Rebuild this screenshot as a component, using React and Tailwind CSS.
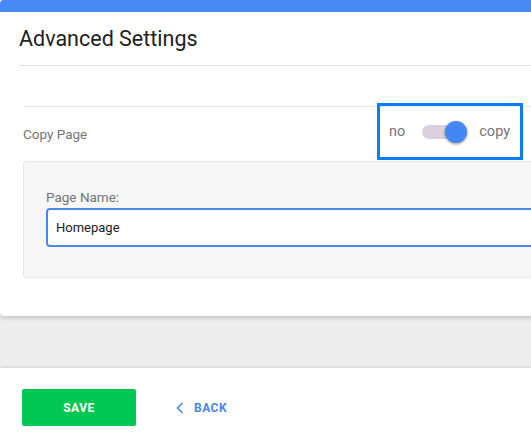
export default function App() {
  return (
    <div className="w-[531px] h-[439px] bg-[#ededed] overflow-hidden flex flex-col" style={{ fontFamily: 'Roboto, "Liberation Sans", sans-serif' }}>
      <div className="w-[560px] shrink-0 bg-white rounded-[4px] border-t-[12px] border-[#4688f4] shadow-[0_2px_4px_rgba(0,0,0,0.18)] pl-[19px] pb-[38px] relative z-10">
        <div className="h-[54px] flex items-center border-b border-[#e0e0e0]">
          <h1 className="text-[21.5px] text-[#212121] font-normal leading-none">Advanced Settings</h1>
        </div>
        <div className="h-[40px]" />
        <div className="ml-[4px] border-t border-[#e8e8e8]">
          <div className="h-[54px] flex items-center">
            <span className="text-[13.5px] text-[#757575]">Copy Page</span>
            <div className="ml-auto mr-[37px] self-start -mt-[4px] w-[146px] h-[57px] border-[3px] border-[#0a7cff] flex items-center pl-[9px]">
              <span className="text-[14.5px] text-[#757575]">no</span>
              <div className="relative ml-[17px] w-[34px] h-[14px] rounded-full bg-[#dccfe0]">
                <div className="absolute -right-[11px] -top-[4px] w-[22px] h-[22px] rounded-full bg-[#4287f5] shadow-[0_1px_3px_rgba(0,0,0,0.45)]" />
              </div>
              <span className="ml-[23px] text-[14.5px] text-[#757575]">copy</span>
            </div>
          </div>
          <div className="bg-[#f6f6f6] border border-[#e6e6e6] rounded-[3px] pt-[27px] pb-[30px] pl-[22px]">
            <div className="text-[13.5px] text-[#757575] leading-[16px]">Page Name:</div>
            <div className="mt-[3px] h-[39px] border-2 border-[#4a89ea] rounded-[4px] bg-white flex items-center pl-[8px]">
              <span className="text-[13px] text-[#212121]">Homepage</span>
            </div>
          </div>
        </div>
      </div>
      <div className="h-[52px] shrink-0" />
      <div className="flex-1 bg-white shadow-[0_-1px_3px_rgba(0,0,0,0.12)] pl-[22px] pt-[21px] flex items-start">
        <button className="w-[114px] h-[37px] bg-[#00c853] rounded-[2px] text-white text-[12px] font-bold tracking-[0.5px]">SAVE</button>
        <button className="ml-[40px] h-[37px] flex items-center text-[#4a86e8] text-[12px] font-bold tracking-[0.5px]">
          <svg width="8" height="12" viewBox="0 0 8 12" className="mr-[10px]">
            <path d="M6.5 1 L1.5 6 L6.5 11" fill="none" stroke="#4a86e8" strokeWidth="1.6" />
          </svg>
          BACK
        </button>
      </div>
    </div>
  );
}
